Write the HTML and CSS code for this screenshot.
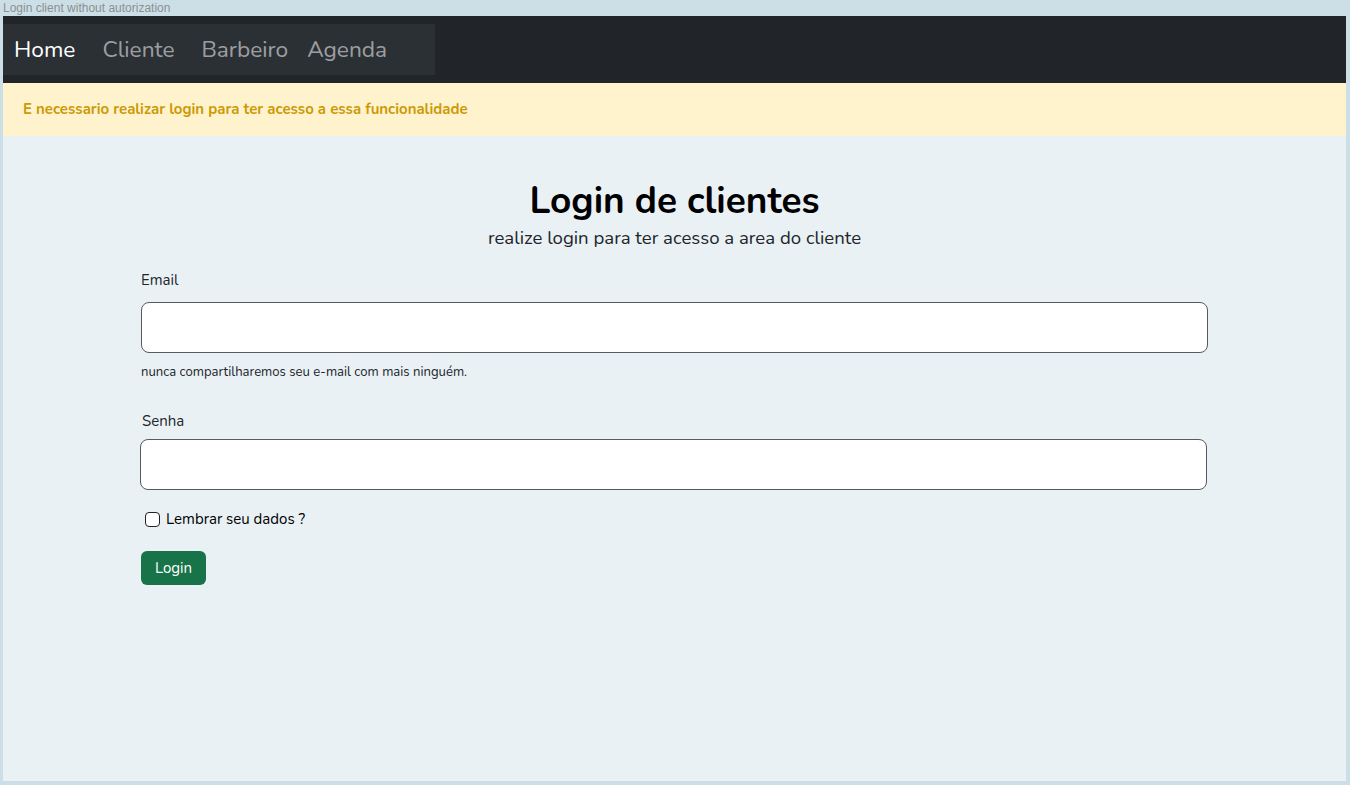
FILE: index.html
```html
<!DOCTYPE html>
<html lang="pt">
<head>
<meta charset="utf-8">
<title>Login client without autorization</title>
<link rel="stylesheet" href="styles.css">
</head>
<body>
<div class="caption">Login client without autorization</div>
<div class="frame">
  <nav class="navbar">
    <div class="nav-inner">
      <a class="nav-link active" href="#">Home</a>
      <a class="nav-link cliente" href="#">Cliente</a>
      <a class="nav-link barbeiro" href="#">Barbeiro</a>
      <a class="nav-link" href="#">Agenda</a>
    </div>
  </nav>
  <div class="alert">E necessario realizar login para ter acesso a essa funcionalidade</div>
  <main class="container">
    <h1 class="title">Login de clientes</h1>
    <p class="subtitle">realize login para ter acesso a area do cliente</p>
    <form class="form">
      <label class="label label-email">Email</label>
      <input class="input input-email" type="email">
      <div class="help">nunca compartilharemos seu e-mail com mais ninguém.</div>
      <label class="label label-senha">Senha</label>
      <input class="input input-senha" type="password">
      <label class="check"><span class="box"></span>Lembrar seu dados ?</label>
      <button class="btn" type="button">Login</button>
    </form>
  </main>
</div>
</body>
</html>
```
FILE: styles.css
```css
* { box-sizing: border-box; }
html, body { margin: 0; padding: 0; }
body {
  background: #cddfe6;
  font-family: "Nunito", "Lato", "Noto Sans", sans-serif;
  width: 1350px;
  height: 785px;
  overflow: hidden;
}
.caption {
  height: 16px;
  padding-left: 3px;
  font: 12px/16px "Liberation Sans", Arial, sans-serif;
  color: #8a8f93;
}
.frame {
  margin-left: 3px;
  width: 1343px;
  height: 765px;
  background: #e9f1f5;
  display: flex;
  flex-direction: column;
}
.navbar {
  height: 67px;
  background: #212529;
  padding-top: 8px;
}
.nav-inner {
  width: 432px;
  height: 51px;
  background: #2b3035;
  display: flex;
  align-items: center;
  padding-left: 11px;
}
.nav-link {
  text-decoration: none;
  font-size: 22.7px;
  color: rgba(255,255,255,0.55);
  margin-right: 27px;
}
.nav-link.active { color: #ffffff; }
.nav-link.barbeiro { margin-right: 19px; }
.alert {
  height: 53px;
  background: #fff3cd;
  color: #cc9a06;
  font-weight: 700;
  font-size: 15px;
  line-height: 53px;
  padding-left: 20px;
}
.container {
  width: 1067px;
  margin-left: 138px;
  display: flex;
  flex-direction: column;
}
.title {
  margin: 44px 0 0;
  font-size: 37px;
  line-height: 43px;
  font-weight: 700;
  color: #000;
  text-align: center;
}
.subtitle {
  margin: 3px 0 0;
  font-size: 18.6px;
  line-height: 24px;
  text-align: center;
  color: #212529;
}
.form { display: flex; flex-direction: column; }
.label {
  font-size: 15px;
  line-height: 22px;
  color: #212529;
}
.label-email { margin-top: 19px; }
.label-senha { margin-top: 29px; margin-left: 1px; }
.input {
  height: 51px;
  border: 1px solid #555b60;
  border-radius: 8px;
  background: #fff;
  font: inherit;
}
.input-email { margin-top: 11px; }
.input-senha { margin-top: 7px; margin-left: -1px; margin-right: 1px; }
.help {
  margin-top: 10px;
  font-size: 13.1px;
  line-height: 18px;
  color: #212529;
}
.check {
  margin-top: 19px;
  margin-left: 4px;
  display: flex;
  align-items: center;
  font-size: 15px;
  line-height: 20px;
  color: #000;
}
.box {
  width: 15px;
  height: 15px;
  border: 1px solid #222;
  border-radius: 4px;
  background: #fff;
  margin-right: 6px;
}
.btn {
  margin-top: 22px;
  align-self: flex-start;
  width: 65px;
  height: 34px;
  border: none;
  border-radius: 6px;
  background: #187349;
  color: #fff;
  font: inherit;
  font-size: 15px;
  padding: 0;
}
```
